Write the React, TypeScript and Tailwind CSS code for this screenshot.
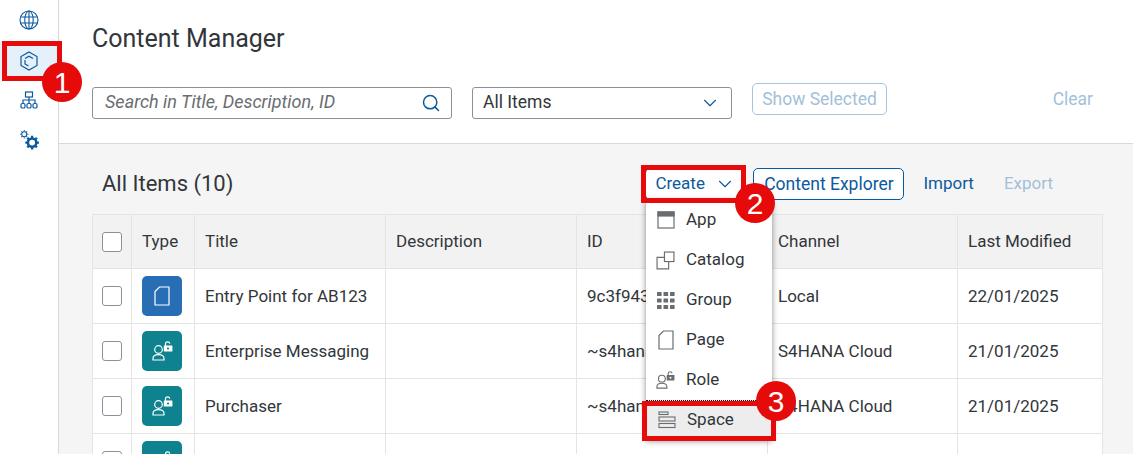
import { Search, ChevronDown } from 'lucide-react';

const BLUE = '#0a5a9e';

function Globe() {
  return (
    <svg width="20" height="20" viewBox="0 0 20 20" fill="none" stroke={BLUE} strokeWidth="1.1">
      <circle cx="10" cy="10" r="9" />
      <ellipse cx="10" cy="10" rx="4.2" ry="9" />
      <path d="M10 1v18M1.6 7h16.8M1.6 13h16.8" />
    </svg>
  );
}

function Cube() {
  return (
    <svg width="18" height="20" viewBox="0 0 18 20" fill="none" stroke={BLUE} strokeWidth="1.2">
      <path d="M9 1l8 4.5v9L9 19l-8-4.5v-9z" />
      <path d="M5 7.5L9 5.2l4 2.3M5 9v4l3.5 2" />
    </svg>
  );
}

function Hierarchy() {
  return (
    <svg width="18" height="18" viewBox="0 0 18 18" fill="none" stroke={BLUE} strokeWidth="1.2">
      <rect x="5.5" y="1" width="7" height="5" />
      <path d="M9 6v6M3 12V9h12v3" />
      <rect x="1" y="12.5" width="4" height="4.5" rx="1.3" />
      <rect x="7" y="12.5" width="4" height="4.5" rx="1.3" />
      <rect x="13" y="12.5" width="4" height="4.5" rx="1.3" />
    </svg>
  );
}

function Gears() {
  return (
    <svg width="21" height="22" viewBox="0 0 20 21" fill="none" stroke={BLUE}>
      <circle cx="5" cy="5" r="2.4" strokeWidth="1" />
      <path d="M5 1v1.2M5 7.8V9M1 5h1.2M7.8 5H9M2.2 2.2l.8.8M7 7l.8.8M7.8 2.2L7 3M3 7l-.8.8" strokeWidth="1" />
      <circle cx="12.5" cy="13" r="4" strokeWidth="2.4" />
      <path d="M12.5 6.5v2M12.5 17.5v2M6 13h2M17 13h2M7.9 8.4l1.4 1.4M15.7 16.2l1.4 1.4M17.1 8.4l-1.4 1.4M9.3 16.2l-1.4 1.4" strokeWidth="2.2" />
    </svg>
  );
}

function PageIcon({ color }: { color: string }) {
  return (
    <svg width="16" height="20" viewBox="0 0 16 20" fill="none" stroke={color} strokeWidth="1.2">
      <path d="M5.5 1H15v18H1V5.5z" />
    </svg>
  );
}

function RoleIcon({ color, hole }: { color: string; hole: string }) {
  return (
    <svg width="21" height="20" viewBox="0 0 21 20" fill="none" stroke={color} strokeWidth="1.2">
      <circle cx="6.5" cy="8.5" r="3.8" />
      <path d="M1 19v-1.5C1 15 3 13.6 6.5 13.6S12 15 12 17.5V19z" />
      <path d="M13.5 5V2.8C13.5 1.5 14.4.8 15.6.8s2 .6 2.2 1.8" />
      <rect x="11.8" y="4.6" width="8.6" height="6" rx="0.5" fill={color} stroke="none" />
      <circle cx="16" cy="7.5" r="1.1" fill={hole} stroke="none" />
    </svg>
  );
}

function CheckBox() {
  return <div className="w-5 h-5 rounded-[3px] border border-[#89919a] bg-white" />;
}

// red number marker laid over the screenshot
function Marker({ n, className }: { n: number; className: string }) {
  return (
    <div
      className={`absolute w-10 h-10 rounded-full bg-[#e60a0a] text-white flex items-center justify-center text-[30px] ${className}`}
      style={{ fontFamily: '"Liberation Sans", sans-serif' }}
    >
      {n}
    </div>
  );
}

const columns = [
  { label: 'Description', w: 'w-[191px]' },
  { label: 'ID', w: 'w-[191px]' },
  { label: 'Channel', w: 'w-[190px]' },
  { label: 'Last Modified', w: 'flex-1' },
];

const rows = [
  { title: 'Entry Point for AB123', id: '9c3f943', channel: 'Local', date: '22/01/2025', page: true },
  { title: 'Enterprise Messaging', id: '~s4hana', channel: 'S4HANA Cloud', date: '21/01/2025', page: false },
  { title: 'Purchaser', id: '~s4hana', channel: 'S4HANA Cloud', date: '21/01/2025', page: false },
  { title: '', id: '', channel: '', date: '', page: false },
];

const menu = [
  {
    label: 'App',
    icon: (
      <svg width="18" height="18" viewBox="0 0 18 18" fill="none" stroke="#6a6d70" strokeWidth="1.2">
        <rect x="1" y="1" width="16" height="16" />
        <rect x="1" y="1" width="16" height="4" fill="#6a6d70" />
      </svg>
    ),
  },
  {
    label: 'Catalog',
    icon: (
      <svg width="19" height="19" viewBox="0 0 18 18" fill="none" stroke="#6a6d70" strokeWidth="1.1">
        <rect x="8" y="1" width="9" height="9" />
        <path d="M8 6H1v11h11v-7" />
      </svg>
    ),
  },
  {
    label: 'Group',
    icon: (
      <svg width="18" height="18" viewBox="0 0 18 18" fill="#6a6d70">
        {[0, 6.5, 13].flatMap((y) =>
          [0, 6.5, 13].map((x) => <rect key={`${x}-${y}`} x={x} y={y + 1} width="4.6" height="4" rx="0.5" />),
        )}
      </svg>
    ),
  },
  { label: 'Page', icon: <PageIcon color="#6a6d70" /> },
  { label: 'Role', icon: <RoleIcon color="#6a6d70" hole="#ffffff" /> },
  {
    label: 'Space',
    icon: (
      <svg width="18" height="18" viewBox="0 0 18 18" fill="none" stroke="#6a6d70" strokeWidth="1.1">
        <rect x="1" y="1" width="9" height="2.5" />
        <rect x="1" y="6" width="16" height="4" />
        <rect x="1" y="12.5" width="16" height="4" />
      </svg>
    ),
  },
];

export default function App() {
  return (
    <div
      className="relative flex w-[1133px] h-[454px] overflow-hidden bg-white text-[#32363a] text-[17px]"
      style={{ fontFamily: 'Roboto, sans-serif' }}
    >
      {/* Side nav */}
      <div className="w-[59px] shrink-0 border-r border-[#d9d9d9] flex flex-col items-center pt-[10px]">
        <div className="h-5 flex items-center justify-center"><Globe /></div>
        <div className="mt-[11px] h-[39px] w-[58px] bg-[#e5f0fa] flex items-center justify-center"><Cube /></div>
        <div className="mt-[10px] h-[20px] flex items-center justify-center"><Hierarchy /></div>
        <div className="mt-[19px] h-[22px] flex items-center justify-center"><Gears /></div>
      </div>

      <div className="flex-1 min-w-0 flex flex-col">
        {/* Header */}
        <div className="h-[144px] shrink-0 border-b border-[#d9d9d9] pl-[33px] pr-[40px] pt-[22px]">
          <h1 className="text-[25px] leading-[34px] font-normal">Content Manager</h1>
          <div className="mt-[27px] flex items-start">
            <div className="mt-[4px] w-[360px] h-8 rounded-[3px] border border-[#89919a] flex items-center justify-between pl-3 pr-[10px]">
              <span className="italic text-[#6a6d70] text-[18px] pb-[3px]">Search in Title, Description, ID</span>
              <Search size={20} color={BLUE} strokeWidth={1.8} />
            </div>
            <div className="ml-5 mt-[4px] w-[260px] h-8 rounded-[3px] border border-[#89919a] flex items-center justify-between pl-[10px] pr-[10px]">
              <span className="text-[17.5px] pb-[2px]">All Items</span>
              <ChevronDown size={22} color={BLUE} strokeWidth={1.2} />
            </div>
            <div className="ml-5 w-[135px] h-8 rounded-[5px] border border-[#a3c4e0] text-[#a3bfd9] text-[17.5px] flex items-center justify-center">
              Show Selected
            </div>
            <div className="ml-auto h-8 flex items-center text-[#a3bfd9] text-[17.5px]">Clear</div>
          </div>
        </div>

        {/* Content */}
        <div className="flex-1 min-h-0 bg-[#f5f5f5] pl-[33px] pr-[30px]">
          <div className="h-[70px] flex items-start pt-[24px] relative">
            <div className="ml-[10px] text-[22px] leading-[31px]">All Items (10)</div>
            <div className="ml-auto flex items-center h-8 text-[#0a5a9e]">
              <div className="w-[98px] h-8 rounded-[5px] border border-[#0a5a9e] bg-white flex items-center pl-[9px] gap-[9px]">
                Create <ChevronDown size={22} strokeWidth={1.2} />
              </div>
              <div className="ml-[10px] w-[151px] h-8 rounded-[5px] border border-[#0a5a9e] bg-white text-[17.5px] flex items-center justify-center">
                Content Explorer
              </div>
              <div className="ml-[19px]">Import</div>
              <div className="ml-[30px] mr-[50px] text-[#a3bfd9]">Export</div>
            </div>
          </div>

          {/* Table */}
          <div className="border-t border-[#e4e4e4]">
            <div className="flex h-[54px] bg-[#f2f2f2] border-b border-[#e4e4e4]">
              <div className="w-[40px] border-x border-[#e4e4e4] flex items-center justify-center"><CheckBox /></div>
              <div className="w-[63px] border-r border-[#e4e4e4] flex items-center pl-[10px]">Type</div>
              <div className="w-[191px] border-r border-[#e4e4e4] flex items-center pl-[10px]">Title</div>
              {columns.map((c) => (
                <div key={c.label} className={`${c.w} border-r border-[#e4e4e4] flex items-center pl-[10px]`}>{c.label}</div>
              ))}
            </div>
            {rows.map((r, i) => (
              <div key={i} className="flex h-[55px] bg-white border-b border-[#e4e4e4]">
                <div className="w-[40px] border-x border-[#e4e4e4] flex items-center justify-center"><CheckBox /></div>
                <div className="w-[63px] border-r border-[#e4e4e4] flex items-center pl-[10px]">
                  <div className={`w-10 h-10 rounded-[5px] flex items-center justify-center ${r.page ? 'bg-[#286eb4]' : 'bg-[#0f828f]'}`}>
                    {r.page ? <PageIcon color="#ffffff" /> : <RoleIcon color="#ffffff" hole="#0f828f" />}
                  </div>
                </div>
                <div className="w-[191px] border-r border-[#e4e4e4] flex items-center pl-[10px] pt-[1px]">{r.title}</div>
                <div className="w-[191px] border-r border-[#e4e4e4]" />
                <div className="w-[191px] border-r border-[#e4e4e4] flex items-center pl-[10px] pt-[1px]">{r.id}</div>
                <div className="w-[190px] border-r border-[#e4e4e4] flex items-center pl-[10px] pt-[1px]">{r.channel}</div>
                <div className="flex-1 border-r border-[#e4e4e4] flex items-center pl-[10px] pt-[1px]">{r.date}</div>
              </div>
            ))}
          </div>
        </div>
      </div>

      {/* Create menu */}
      <div className="absolute left-[646px] top-[200px] w-[126px] bg-white shadow-[0_1px_6px_rgba(0,0,0,0.45)]">
        {menu.map((m) => (
          <div
            key={m.label}
            className={`h-10 flex items-center pl-[10px] gap-[11px] ${m.label === 'Space' ? 'bg-[#ededed] border border-dotted border-black pl-[9px]' : ''}`}
          >
            <span className="w-[19px] flex justify-center">{m.icon}</span>
            {m.label}
          </div>
        ))}
      </div>

      {/* Annotations */}
      <div className="absolute left-[2px] top-[41px] w-[60px] h-[40px] border-[5px] border-[#e60a0a]" />
      <div className="absolute left-[641px] top-[165px] w-[105px] h-[38px] border-[5px] border-[#e60a0a]" />
      <div className="absolute left-[642px] top-[401px] w-[134px] h-[40px] border-[5px] border-[#e60a0a]" />
      <Marker n={1} className="left-[42px] top-[62px]" />
      <Marker n={2} className="left-[735px] top-[183px]" />
      <Marker n={3} className="left-[756px] top-[381px]" />
    </div>
  );
}
